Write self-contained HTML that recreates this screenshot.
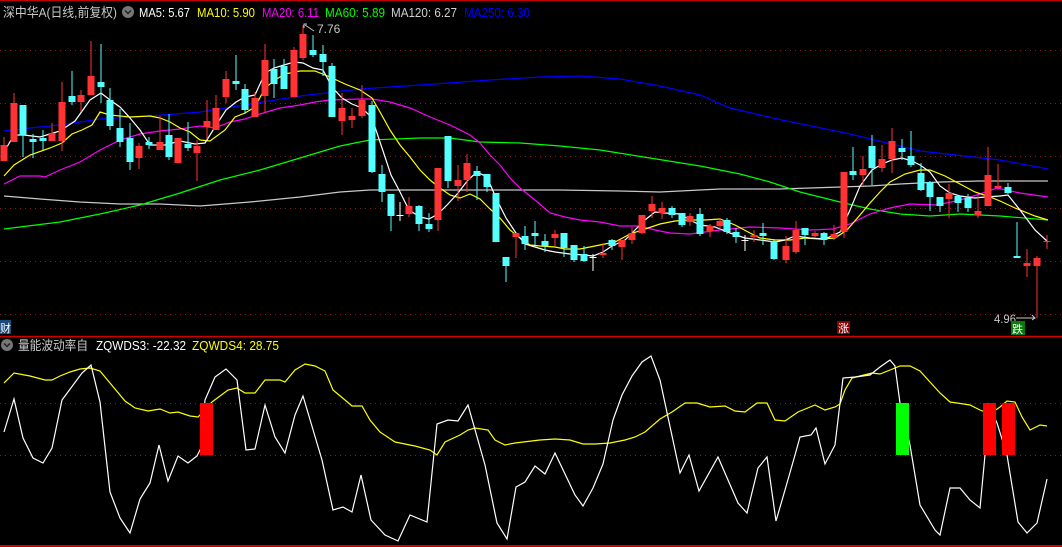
<!DOCTYPE html>
<html><head><meta charset="utf-8">
<style>
html,body{margin:0;padding:0;background:#000;}
body{width:1062px;height:547px;overflow:hidden;position:relative;font-family:"Liberation Sans","Noto Sans CJK SC",sans-serif;}
svg{position:absolute;left:0;top:0;}
text{font-family:"Liberation Sans","Noto Sans CJK SC",sans-serif;}
</style></head><body>
<svg id="s" width="1062" height="547" viewBox="0 0 1062 547" xmlns="http://www.w3.org/2000/svg">
<rect width="1062" height="547" fill="#000"/>
<line x1="0" y1="0.5" x2="1062" y2="0.5" stroke="#c00000" stroke-width="1"/>
<g stroke="#8a1a1a" stroke-width="1" stroke-dasharray="1,4">
<line x1="0" y1="50.5" x2="1062" y2="50.5"/>
<line x1="0" y1="103.5" x2="1062" y2="103.5"/>
<line x1="0" y1="156.5" x2="1062" y2="156.5"/>
<line x1="0" y1="208.5" x2="1062" y2="208.5"/>
<line x1="0" y1="261.5" x2="1062" y2="261.5"/>
<line x1="0" y1="314.5" x2="1062" y2="314.5"/>
<line x1="0" y1="403.5" x2="1062" y2="403.5"/>
<line x1="0" y1="455.5" x2="1062" y2="455.5"/>
</g>
<line x1="0" y1="336.5" x2="1062" y2="336.5" stroke="#d00000" stroke-width="1.5"/>
<line x1="0" y1="546" x2="1062" y2="546" stroke="#d00000" stroke-width="2"/>
<g id="ma" fill="none" stroke-width="1.2"></g>
<g id="cd"></g>
<g id="low" fill="none" stroke-width="1.2"></g>
<!-- header -->
<text x="3" y="17" font-size="13" fill="#c8c8c8" textLength="114" lengthAdjust="spacingAndGlyphs">深中华A(日线,前复权)</text>
<circle cx="128" cy="12" r="6" fill="#777"/>
<path d="M125 10.5 L128 13.5 L131 10.5" stroke="#222" stroke-width="1.5" fill="none"/>
<text x="139" y="17" font-size="13" fill="#ffffff" textLength="51" lengthAdjust="spacingAndGlyphs">MA5: 5.67</text>
<text x="197" y="17" font-size="13" fill="#ffff00" textLength="58" lengthAdjust="spacingAndGlyphs">MA10: 5.90</text>
<text x="262" y="17" font-size="13" fill="#ff00ff" textLength="57" lengthAdjust="spacingAndGlyphs">MA20: 6.11</text>
<text x="325" y="17" font-size="13" fill="#00ff00" textLength="60" lengthAdjust="spacingAndGlyphs">MA60: 5.89</text>
<text x="391" y="17" font-size="13" fill="#d0d0d0" textLength="66" lengthAdjust="spacingAndGlyphs">MA120: 6.27</text>
<text x="464" y="17" font-size="13" fill="#0000ff" textLength="66" lengthAdjust="spacingAndGlyphs">MA250: 6.30</text>
<text x="317" y="33" font-size="12" fill="#c8c8c8">7.76</text>
<path d="M304 28 L304 24 L307 24 M305 25 L314 31" stroke="#c8c8c8" fill="none"/>
<text x="994" y="323" font-size="12" fill="#c8c8c8" textLength="22" lengthAdjust="spacingAndGlyphs">4.96</text>
<path d="M1016 318 L1035 318 M1032 315 L1035 318 L1032 320" stroke="#c8c8c8" fill="none"/>
<rect x="0" y="320" width="11" height="14" fill="#1a4a7a"/>
<text x="0" y="332" font-size="11" fill="#fff">财</text>
<rect x="837" y="321" width="13" height="13" fill="#8a0000"/>
<text x="838" y="332" font-size="11" fill="#fff">涨</text>
<rect x="1011" y="321" width="14" height="14" fill="#0a7a0a"/>
<text x="1012" y="333" font-size="11" fill="#fff">跌</text>
<circle cx="7" cy="345" r="6" fill="#777"/>
<path d="M4 343.5 L7 346.5 L10 343.5" stroke="#222" stroke-width="1.5" fill="none"/>
<text x="18" y="350" font-size="13" fill="#c8c8c8" textLength="70" lengthAdjust="spacingAndGlyphs">量能波动率自</text>
<text x="96" y="350" font-size="13" fill="#ffffff" textLength="90" lengthAdjust="spacingAndGlyphs">ZQWDS3: -22.32</text>
<text x="192" y="350" font-size="13" fill="#ffff00" textLength="87" lengthAdjust="spacingAndGlyphs">ZQWDS4: 28.75</text>
</svg>
<script>
var NS="http://www.w3.org/2000/svg";
function el(p,t,a){var e=document.createElementNS(NS,t);for(var k in a)e.setAttribute(k,a[k]);p.appendChild(e);return e;}
function pl(p,c,pts){el(p,"polyline",{points:pts.map(function(q){return q.join(",")}).join(" "),stroke:c});}
var ma=document.getElementById("ma");
pl(ma,"#c8c8c8",[[4,196],[40,199],[80,202],[120,204],[160,204],[200,206],[250,202],[300,197],[340,192],[370,190],[450,190],[500,190],[560,190],[620,191],[660,192],[720,189],[780,189],[840,187],[870,186],[900,184],[940,182],[980,181],[1048,181]]);
pl(ma,"#00ff00",[[4,229],[60,222],[100,214],[140,205],[180,193],[220,180],[260,170],[300,158],[340,146],[370,140],[420,138],[450,138],[480,142],[520,143],[560,146],[600,150],[650,158],[700,166],[740,174],[770,182],[800,192],[840,202],[870,209],[900,214],[930,216],[960,214],[1000,216],[1048,220]]);
pl(ma,"#0000ff",[[4,131],[30,128],[60,125],[100,119],[150,116],[200,112],[245,105],[300,96],[360,89],[420,85],[490,80],[540,77],[580,76],[620,79],[660,86],[700,95],[730,108],[782,120],[850,134],[920,151],[1000,160],[1048,169]]);
pl(ma,"#ff00ff",[[4,184],[20,176],[40,176],[45,177],[60,170],[80,162],[100,150],[120,140],[140,134],[160,131],[180,129],[200,126],[215,128],[230,122],[245,119],[260,114],[280,108],[300,105],[315,102],[330,100],[360,99],[372,99],[390,102],[410,108],[430,117],[450,125],[470,135],[480,143],[490,155],[500,165],[510,178],[520,188],[535,200],[550,213],[565,217],[580,220],[600,222],[620,226],[640,226],[655,230],[670,233],[690,234],[720,230],[750,227],[780,228],[810,230],[833,229],[850,224],[870,214],[890,208],[910,204],[937,205],[960,200],[980,194],[997,188],[1020,193],[1048,197]]);
pl(ma,"#ffff00",[[4,176],[14,165],[30,155],[50,148],[62,143],[72,134],[82,130],[92,125],[100,112],[110,115],[130,117],[150,116],[160,118],[170,122],[180,128],[190,132],[200,140],[210,141],[225,130],[235,117],[245,113],[255,107],[265,88],[275,80],[285,74],[300,71],[315,71],[330,77],[345,84],[360,90],[372,98],[380,112],[390,130],[400,145],[410,157],[420,170],[430,180],[440,188],[450,195],[460,198],[470,194],[480,199],[490,209],[500,218],[510,230],[520,238],[530,245],[540,246],[555,247],[565,249],[580,249],[600,245],[615,242],[630,234],[645,229],[660,224],[675,221],[690,220],[705,220],[720,219],[735,225],[750,233],[760,238],[775,240],[790,240],[805,238],[820,239],[835,238],[847,230],[860,215],[870,203],[880,192],[890,182],[905,174],[920,170],[930,170],[945,176],[960,184],[975,192],[990,197],[1000,201],[1015,208],[1035,216],[1048,220]]);
pl(ma,"#ffffff",[[4,152],[14,135],[24,135],[40,137],[60,131],[75,121],[90,100],[101,93],[110,100],[120,107],[130,118],[140,130],[150,145],[165,145],[180,141],[195,144],[205,143],[215,127],[226,110],[236,102],[245,97],[255,95],[265,73],[274,68],[284,65],[294,62],[303,63],[313,68],[323,70],[332,87],[342,98],[352,104],[362,108],[372,118],[382,148],[391,175],[400,192],[409,210],[420,217],[429,219],[438,214],[448,204],[458,193],[468,180],[477,172],[487,177],[496,198],[506,218],[516,233],[525,244],[535,247],[545,250],[555,252],[570,254],[584,255],[593,256],[603,252],[612,246],[625,240],[635,230],[645,220],[655,212],[665,213],[680,214],[690,220],[700,225],[715,227],[730,233],[745,238],[760,240],[775,242],[785,240],[795,236],[810,238],[825,239],[840,232],[850,210],[860,186],[872,170],[882,164],[892,160],[902,158],[912,161],[920,165],[930,172],[940,186],[950,193],[960,196],[975,198],[985,197],[1000,196],[1008,195],[1020,210],[1035,230],[1048,242]]);
var C=[[4,'r',145,161,137,161],[14,'r',103,142,93,142],[23,'c',105,135,105,157],[33,'c',139,142,134,158],[43,'c',138,141,130,150],[52,'r',133,141,123,141],[62,'r',102,141,82,151],[72,'c',96,102,71,105],[81,'r',95,102,90,112],[91,'r',76,95,41,95],[101,'c',82,87,44,103],[110,'c',100,126,88,130],[120,'c',128,142,109,147],[130,'c',138,162,123,170],[139,'r',146,158,143,169],[149,'c',142,145,137,149],[160,'r',142,150,116,150],[169,'c',135,157,114,160],[178,'r',138,163,138,163],[188,'c',144,148,122,151],[197,'r',146,153,140,181],[207,'r',121,127,100,139],[216,'r',108,130,95,130],[226,'r',79,97,71,103],[236,'c',81,84,55,90],[245,'c',89,110,84,114],[255,'r',98,117,92,117],[265,'r',60,96,44,113],[274,'c',69,84,59,98],[284,'c',66,89,59,89],[294,'r',50,97,47,97],[303,'r',34,58,25,60],[313,'c',50,55,35,57],[323,'c',54,62,45,76],[332,'c',66,117,63,117],[342,'r',108,121,93,135],[352,'r',116,120,108,128],[362,'r',100,116,85,118],[372,'c',105,172,101,173],[382,'c',174,192,165,202],[391,'c',194,216,194,231],[400,'w',215,216,202,221],[409,'r',206,214,197,217],[419,'c',206,224,205,231],[429,'c',224,229,213,232],[438,'r',168,220,168,231],[448,'c',136,181,136,188],[458,'r',180,186,165,201],[467,'r',163,180,154,192],[477,'c',171,176,166,200],[487,'c',174,187,174,192],[496,'c',193,242,193,242],[506,'c',257,266,257,282],[516,'r',233,237,233,258],[525,'c',236,244,226,250],[535,'c',233,236,221,245],[545,'c',241,246,234,252],[555,'r',234,238,230,246],[564,'c',233,248,233,257],[574,'c',245,260,245,262],[584,'c',254,261,246,262],[593,'w',257,258,254,271],[603,'r',253,255,243,258],[612,'c',240,246,239,250],[622,'r',240,247,240,260],[632,'r',233,240,227,244],[642,'r',215,233,215,234],[652,'r',204,211,196,218],[662,'r',208,213,202,219],[672,'c',208,215,206,218],[682,'c',213,225,213,227],[690,'r',216,222,213,226],[700,'c',214,234,208,236],[710,'r',226,231,224,237],[720,'r',221,226,218,230],[727,'c',220,232,218,234],[736,'c',232,237,228,243],[745,'w',240,241,235,251],[754,'r',235,237,230,242],[763,'c',233,236,223,245],[774,'c',241,259,239,260],[786,'r',246,260,236,263],[796,'r',230,252,221,254],[805,'c',228,235,228,245],[815,'r',233,236,231,238],[824,'c',233,240,232,245],[834,'r',234,238,225,240],[844,'r',172,232,172,238],[853,'c',171,175,147,180],[863,'r',169,175,156,185],[872,'c',146,168,135,185],[882,'r',159,168,145,172],[892,'r',141,159,128,173],[902,'c',148,152,139,160],[911,'c',156,165,131,167],[921,'c',173,190,163,191],[930,'c',182,197,181,211],[940,'c',197,206,198,212],[949,'r',193,199,184,218],[958,'c',196,203,195,212],[968,'c',198,208,194,212],[978,'r',211,215,195,218],[988,'r',175,206,147,206],[998,'r',186,188,164,190],[1008,'c',187,193,183,194],[1017,'c',256,258,222,258],[1027,'r',263,266,249,277],[1037,'r',258,266,256,318],[1047,'r',241,242,235,249]];
var cd=document.getElementById("cd");
var col={r:"#ff3333",c:"#55ffff",w:"#ffffff"};
C.forEach(function(k){var x=k[0],c=col[k[1]];
el(cd,"rect",{x:x-0.5,y:k[4],width:1,height:k[5]-k[4],fill:c});
var h=Math.max(1,k[3]-k[2]);
el(cd,"rect",{x:x-3.5,y:k[2],width:7,height:h,fill:c});});
var low=document.getElementById("low");
pl(low,"#ffff00",[[4,383],[14,373],[30,376],[45,380],[52,380],[60,376],[70,372],[80,369],[90,368],[100,371],[110,383],[125,401],[135,408],[148,411],[160,409],[170,413],[178,412],[190,416],[198,417],[205,410],[212,402],[228,390],[237,388],[245,393],[255,393],[265,380],[280,380],[285,382],[295,370],[305,364],[315,366],[325,371],[333,390],[345,400],[352,406],[362,406],[370,420],[380,432],[395,442],[415,446],[430,450],[437,455],[445,442],[460,435],[468,430],[475,428],[488,430],[495,440],[505,445],[515,443],[540,440],[555,439],[570,440],[583,444],[595,444],[610,443],[625,440],[635,437],[645,432],[660,419],[672,412],[685,403],[697,403],[710,407],[725,406],[735,411],[745,412],[757,403],[767,403],[775,420],[785,421],[798,412],[815,405],[825,410],[835,407],[840,404],[845,390],[852,378],[860,376],[872,373],[880,374],[890,370],[900,366],[910,366],[920,371],[930,382],[940,393],[950,402],[957,403],[970,405],[980,410],[990,414],[1000,407],[1007,401],[1015,402],[1022,417],[1030,430],[1040,425],[1047,426]]);
pl(low,"#ffffff",[[4,432],[14,399],[23,438],[33,458],[43,463],[52,448],[62,400],[82,373],[91,365],[100,402],[110,492],[120,518],[130,533],[140,499],[150,483],[159,445],[168,481],[178,456],[188,463],[197,456],[201,448],[205,400],[215,377],[226,369],[237,380],[246,450],[255,449],[265,405],[275,437],[285,453],[295,415],[303,396],[322,460],[333,510],[343,507],[352,512],[361,475],[371,520],[385,535],[398,541],[410,515],[427,522],[437,424],[448,420],[458,421],[468,405],[485,465],[497,523],[507,539],[516,487],[525,482],[535,466],[545,474],[555,453],[565,474],[575,495],[583,506],[593,488],[603,464],[613,420],[622,395],[632,376],[642,362],[651,356],[660,380],[680,473],[689,455],[699,491],[718,457],[738,503],[747,513],[758,468],[767,457],[776,521],[785,490],[795,455],[800,437],[811,435],[816,428],[825,464],[835,445],[843,378],[855,377],[870,375],[880,367],[890,360],[895,366],[900,403],[910,445],[920,505],[935,530],[940,535],[950,488],[960,488],[970,500],[980,508],[985,455],[988,403],[997,423],[1007,455],[1018,522],[1027,533],[1037,523],[1047,479]]);
el(low,"rect",{x:200,y:403,width:13,height:52,fill:"#ff0000",stroke:"none"});
el(low,"rect",{x:896,y:403,width:13,height:52,fill:"#00ff00",stroke:"none"});
el(low,"rect",{x:983,y:403,width:13,height:52,fill:"#ff0000",stroke:"none"});
el(low,"rect",{x:1002,y:403,width:13,height:52,fill:"#ff0000",stroke:"none"});
</script>
</body></html>
